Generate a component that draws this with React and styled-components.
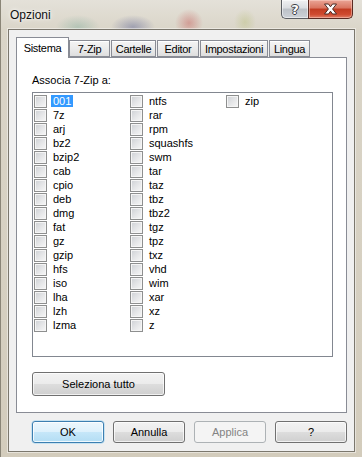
import React from "react";
import styled, { createGlobalStyle } from "styled-components";

const GlobalStyle = createGlobalStyle`
  html, body {
    margin: 0;
    padding: 0;
    background: #d6d0c2;
  }
  body {
    font-family: "Liberation Sans", Arial, sans-serif;
    font-size: 11px;
    color: #000;
  }
  * { box-sizing: border-box; }
`;

const tabs = ["Sistema", "7-Zip", "Cartelle", "Editor", "Impostazioni", "Lingua"];
const tabWidths = [53, 41, 45, 42, 68, 41];

const formats = [
  "001", "7z", "arj", "bz2", "bzip2", "cab", "cpio", "deb", "dmg", "fat", "gz", "gzip",
  "hfs", "iso", "lha", "lzh", "lzma",
  "ntfs", "rar", "rpm", "squashfs", "swm", "tar", "taz", "tbz", "tbz2", "tgz", "tpz",
  "txz", "vhd", "wim", "xar", "xz", "z",
  "zip",
];

function App() {
  return (
    <>
      <GlobalStyle />
      <Window>
        <TitleBar>
          <Title>Opzioni</Title>
          <CaptionButtons>
            <HelpButton>?</HelpButton>
            <CloseButton>
              <svg width="15" height="12" viewBox="0 0 15 12">
                <polygon
                  points="1.5,1 5.5,1 7.5,3.8 9.5,1 13.5,1 9.6,6 13.5,11 9.5,11 7.5,8.2 5.5,11 1.5,11 5.4,6"
                  fill="#fff"
                  stroke="#4a2a24"
                  strokeWidth="1"
                  strokeLinejoin="round"
                />
              </svg>
            </CloseButton>
          </CaptionButtons>
        </TitleBar>
        <Client>
          <TabStrip>
            {tabs.map((t, i) => (
              <Tab key={t} $active={i === 0} $w={tabWidths[i]}>
                {t}
              </Tab>
            ))}
          </TabStrip>
          <Panel>
            <GroupLabel>Associa 7-Zip a:</GroupLabel>
            <ListBox>
              {formats.map((f, i) => (
                <Item key={f}>
                  <CheckBox />
                  <ItemLabel $selected={i === 0}>{f}</ItemLabel>
                </Item>
              ))}
            </ListBox>
            <PushButton $w={133} $h={24} style={{ marginTop: 15 }}>
              Seleziona tutto
            </PushButton>
          </Panel>
          <ButtonRow>
            <PushButton $default>OK</PushButton>
            <PushButton>Annulla</PushButton>
            <PushButton $disabled>Applica</PushButton>
            <PushButton>?</PushButton>
          </ButtonRow>
        </Client>
      </Window>
    </>
  );
}

export default App;

const Window = styled.div`
  width: 362px;
  height: 457px;
  display: flex;
  flex-direction: column;
  overflow: hidden;
  border-left: 1px solid #8a8577;
  background:
    radial-gradient(ellipse 22px 12px at 77px 27px, rgba(80, 150, 130, 0.28), rgba(80, 150, 130, 0) 100%),
    radial-gradient(ellipse 22px 12px at 132px 27px, rgba(50, 60, 130, 0.35), rgba(50, 60, 130, 0) 100%),
    radial-gradient(ellipse 14px 14px at 188px 23px, rgba(190, 50, 50, 0.35), rgba(190, 50, 50, 0) 100%),
    radial-gradient(ellipse 11px 13px at 244px 22px, rgba(170, 180, 90, 0.3), rgba(170, 180, 90, 0) 100%),
    linear-gradient(#e4e1d9 0px, #dad5c8 30px, #d3ccbc 100%);
`;

const TitleBar = styled.div`
  height: 29px;
  display: flex;
  align-items: flex-start;
  padding-left: 9px;
`;

const Title = styled.div`
  margin-top: 8px;
  font-size: 12px;
  line-height: 14px;
  color: #111;
  text-shadow: 0 0 6px rgba(255, 255, 255, 0.9), 0 0 3px rgba(255, 255, 255, 0.9);
`;

const CaptionButtons = styled.div`
  margin-left: auto;
  margin-right: 9px;
  display: flex;
`;

const HelpButton = styled.div`
  width: 27px;
  height: 19px;
  display: flex;
  align-items: center;
  justify-content: center;
  border: 1px solid #5b5e63;
  border-top: none;
  border-right: none;
  border-bottom-left-radius: 5px;
  background: linear-gradient(#f0f1f2 0%, #dadde1 45%, #bcc1c7 50%, #cdd2d8 100%);
  box-shadow: inset 0 0 0 1px rgba(255, 255, 255, 0.5);
  color: #fff;
  font-family: "DejaVu Sans", sans-serif;
  font-weight: bold;
  font-size: 13px;
  text-shadow: 1px 0 0 #3b3e44, -1px 0 0 #3b3e44, 0 1px 0 #3b3e44, 0 -1px 0 #3b3e44;
`;

const CloseButton = styled.div`
  width: 45px;
  height: 19px;
  display: flex;
  align-items: center;
  justify-content: center;
  border: 1px solid #5a2a22;
  border-top: none;
  border-bottom-right-radius: 5px;
  background: linear-gradient(#eaa596 0%, #d9745f 45%, #c13b21 50%, #cf4a2f 80%, #e07e66 100%);
  box-shadow: inset 0 0 0 1px rgba(255, 220, 210, 0.45);
`;

const Client = styled.div`
  margin: 0 7px 5px 7px;
  height: 423px;
  border: 1px solid #7b776d;
  box-shadow: 0 0 0 1px rgba(255, 255, 255, 0.45);
  background: #f0f0f0;
  padding: 7px 7px 0 7px;
  display: flex;
  flex-direction: column;
`;

const TabStrip = styled.div`
  height: 20px;
  display: flex;
  align-items: flex-end;
  gap: 1px;
  position: relative;
  z-index: 1;
`;

const Tab = styled.div`
  width: ${(p) => p.$w}px;
  height: ${(p) => (p.$active ? 21 : 17)}px;
  margin-bottom: ${(p) => (p.$active ? -1 : 0)}px;
  margin-right: ${(p) => (p.$active ? -1 : 0)}px;
  border: 1px solid #898c95;
  border-bottom: ${(p) => (p.$active ? "none" : "1px solid #898c95")};
  background: ${(p) =>
    p.$active ? "#fff" : "linear-gradient(#f4f4f4 0%, #ebebeb 50%, #dedede 100%)"};
  box-shadow: ${(p) => (p.$active ? "none" : "inset 0 1px 0 #fff")};
  display: flex;
  align-items: center;
  justify-content: center;
  padding-top: ${(p) => (p.$active ? 0 : 1)}px;
  line-height: 13px;
  letter-spacing: -0.3px;
  white-space: nowrap;
`;

const Panel = styled.div`
  height: 356px;
  border: 1px solid #898c95;
  background: #fff;
  padding: 16px 0 0 15px;
`;

const GroupLabel = styled.div`
  line-height: 13px;
`;

const ListBox = styled.div`
  margin-top: 5px;
  width: 301px;
  height: 265px;
  border: 1px solid #828790;
  background: #fff;
  padding-top: 1px;
  display: grid;
  grid-template-rows: repeat(17, 14px);
  grid-auto-flow: column;
  grid-auto-columns: 96px;
  align-content: start;
`;

const Item = styled.div`
  display: flex;
  align-items: center;
  padding-left: 1px;
  height: 14px;
`;

const CheckBox = styled.span`
  width: 13px;
  height: 13px;
  flex: none;
  border: 1px solid #8e8f8f;
  background: linear-gradient(135deg, #cdd0d4 0%, #e4e5e7 50%, #f7f7f7 100%);
  box-shadow: inset 0 0 0 1px #f5f5f5;
`;

const ItemLabel = styled.span`
  margin-left: 4px;
  padding: 0 2px;
  line-height: 12px;
  white-space: nowrap;
  background: ${(p) => (p.$selected ? "#3399ff" : "transparent")};
  color: ${(p) => (p.$selected ? "#fff" : "#000")};
`;

const ButtonRow = styled.div`
  margin-top: 8px;
  padding-left: 16px;
  display: flex;
  gap: 9px;
`;

const PushButton = styled.div`
  width: ${(p) => p.$w || 72}px;
  height: ${(p) => p.$h || 22}px;
  display: flex;
  align-items: center;
  justify-content: center;
  border-radius: 3px;
  line-height: 13px;
  border: 1px solid
    ${(p) => (p.$default ? "#3c7fb1" : p.$disabled ? "#adb2b5" : "#707070")};
  color: ${(p) => (p.$disabled ? "#838383" : "#000")};
  background: ${(p) =>
    p.$default
      ? "linear-gradient(#ecf7fd 0%, #ddf1fc 50%, #c6e7f9 51%, #b3ddf4 100%)"
      : p.$disabled
      ? "#f4f4f4"
      : "linear-gradient(#f2f2f2 0%, #ebebeb 50%, #dddddd 51%, #cfcfcf 100%)"};
  box-shadow: ${(p) =>
    p.$disabled
      ? "none"
      : p.$default
      ? "inset 0 0 0 1px rgba(255, 255, 255, 0.8), 0 0 0 0.5px #9fd3ef"
      : "inset 0 0 0 1px rgba(255, 255, 255, 0.7)"};
`;
